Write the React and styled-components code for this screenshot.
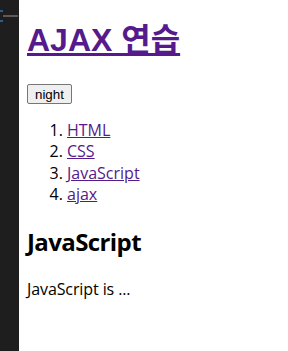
import React from 'react';
import styled, { createGlobalStyle } from 'styled-components';

const GlobalStyle = createGlobalStyle`
  html, body {
    margin: 0;
    padding: 0;
    background: #ffffff;
  }
  body {
    font-family: "Open Sans", "Noto Sans CJK KR", sans-serif;
  }
`;

const topics = [
  { id: 'html', title: 'HTML' },
  { id: 'css', title: 'CSS' },
  { id: 'javascript', title: 'JavaScript' },
  { id: 'ajax', title: 'ajax' },
];

const App = () => {
  return (
    <Page>
      <GlobalStyle />
      <SideBar>
        <Mark color="#2f5d8a" width={3} />
        <Mark color="#5a5a5a" width={15} offset={3} />
        <Mark color="#2f5d8a" width={3} />
      </SideBar>
      <Content>
        <Title>
          <TitleLink href="#">AJAX 연습</TitleLink>
        </Title>
        <NightButton type="button">night</NightButton>
        <TopicList>
          {topics.map(topic => (
            <TopicItem key={topic.id}>
              <TopicLink href={`#!${topic.id}`}>{topic.title}</TopicLink>
            </TopicItem>
          ))}
        </TopicList>
        <article>
          <ArticleTitle>JavaScript</ArticleTitle>
          <ArticleBody>JavaScript is ...</ArticleBody>
        </article>
      </Content>
    </Page>
  );
};

export default App;

const Page = styled.div`
  display: flex;
  width: 288px;
  height: 351px;
  overflow: hidden;
`;

const SideBar = styled.div`
  display: flex;
  flex-direction: column;
  gap: 3px;
  width: 19px;
  flex-shrink: 0;
  padding-top: 10px;
  box-sizing: border-box;
  background-color: #1e1e1e;
`;

const Mark = styled.span`
  display: block;
  height: 2px;
  width: ${props => props.width}px;
  margin-left: ${props => props.offset || 0}px;
  background-color: ${props => props.color};
`;

const Content = styled.div`
  flex: 1;
  padding: 22px 8px 0;
`;

const Title = styled.h1`
  margin: 0;
  font-family: "Liberation Sans", "Noto Sans CJK KR", sans-serif;
  font-size: 32px;
  font-weight: 700;
  line-height: 37px;
`;

const TitleLink = styled.a`
  color: #551a8b;
  text-decoration: underline;
`;

const NightButton = styled.button`
  display: block;
  margin-top: 25px;
  height: 20px;
  padding: 0 7px;
  font-family: "Liberation Sans", Arial, sans-serif;
  font-size: 13.33px;
  color: #000000;
  background-color: #efefef;
  border: 1px solid #767676;
  border-radius: 2px;
`;

const TopicList = styled.ol`
  margin: 16px 0 0;
  padding-left: 40px;
  font-size: 16px;
  line-height: 21.3px;
`;

const TopicItem = styled.li`
  color: #000000;
`;

const TopicLink = styled.a`
  color: #551a8b;
  text-decoration: underline;
`;

const ArticleTitle = styled.h2`
  margin: 21px 0 0;
  font-size: 24px;
  font-weight: 700;
  line-height: 32px;
  letter-spacing: -0.6px;
  color: #000000;
`;

const ArticleBody = styled.p`
  margin: 21px 0 0;
  font-size: 16px;
  line-height: 21px;
  letter-spacing: -0.1px;
  color: #000000;
`;
